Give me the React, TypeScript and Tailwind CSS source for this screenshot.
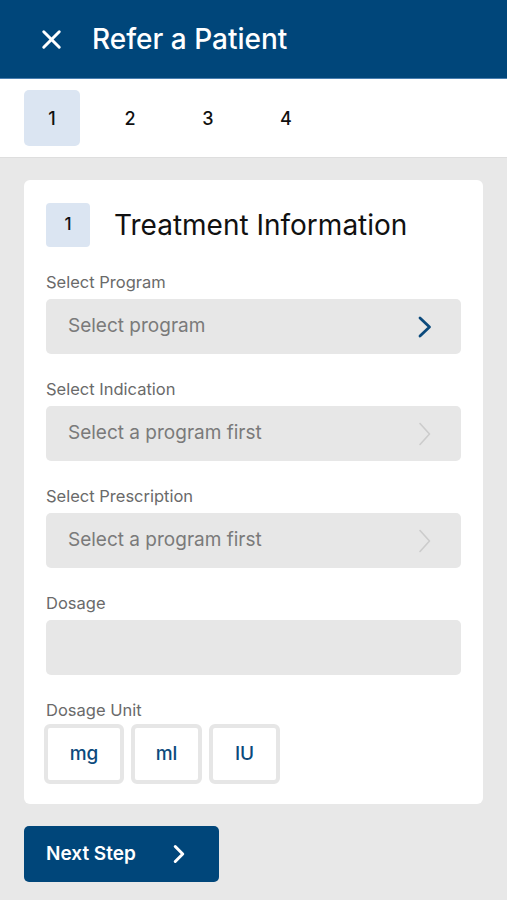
import { ChevronRight, X } from 'lucide-react';

const FIELDS = [
  { label: 'Select Program', placeholder: 'Select program', enabled: true },
  { label: 'Select Indication', placeholder: 'Select a program first', enabled: false },
  { label: 'Select Prescription', placeholder: 'Select a program first', enabled: false },
];

const UNITS = [
  { name: 'mg', width: 'w-[80px]' },
  { name: 'ml', width: 'w-[71px]' },
  { name: 'IU', width: 'w-[71px]' },
];

function Chevron({ enabled }: { enabled: boolean }) {
  if (enabled) {
    return (
      <svg width="16" height="24" viewBox="0 0 16 24" fill="none" className="text-[#0b4a7c]">
        <path d="M3 3l9.5 9L3 21" stroke="currentColor" strokeWidth="2.8" strokeLinecap="round" strokeLinejoin="round" />
      </svg>
    );
  }
  return (
    <svg width="16" height="26" viewBox="0 0 16 26" fill="none" className="text-[#cccccc]">
      <path d="M3 2.5l9.5 10.5L3 23.5" stroke="currentColor" strokeWidth="1.6" strokeLinecap="round" strokeLinejoin="round" />
    </svg>
  );
}

function SelectField({ label, placeholder, enabled }: { label: string; placeholder: string; enabled: boolean }) {
  return (
    <div className="mt-[25px]">
      <div className="text-[16.5px] leading-5 text-[#6a6a6a]">{label}</div>
      <button className="mt-[7px] flex h-[55px] w-full items-center justify-between rounded-[5px] bg-[#e7e7e7] pl-[22px] pr-[28px] text-left">
        <span className="text-[19px] text-[#7a7a7a]">{placeholder}</span>
        <Chevron enabled={enabled} />
      </button>
    </div>
  );
}

export default function App() {
  return (
    <div className="min-h-[900px] bg-[#e8e8e8] font-['Inter',sans-serif]">
      <header className="flex h-[79px] items-center border-b border-[#4a7fb0] bg-[#00467a] pl-[36px]">
        <X size={31} strokeWidth={2.3} className="text-white" />
        <h1 className="ml-[25px] text-[28px] font-medium text-white">Refer a Patient</h1>
      </header>

      <nav className="flex h-[79px] items-center gap-[22px] border-b border-[#dedede] bg-white pl-[24px]">
        {[1, 2, 3, 4].map((n) => (
          <div
            key={n}
            className={
              n === 1
                ? 'flex h-[56px] w-[56px] items-center justify-center rounded-[5px] bg-[#dbe5f2] text-[18px] font-medium text-[#111]'
                : 'flex h-[56px] w-[56px] items-center justify-center text-[18px] font-medium text-[#111]'
            }
          >
            {n}
          </div>
        ))}
      </nav>

      <main className="px-[24px] pt-[22px]">
        <section className="rounded-[6px] bg-white px-[22px] pb-[20px] pt-[23px]">
          <div className="flex items-center">
            <div className="flex h-[44px] w-[44px] items-center justify-center rounded-[4px] bg-[#dbe5f2] text-[17px] font-medium text-[#111]">
              1
            </div>
            <h2 className="ml-[24px] text-[28px] text-[#111]">Treatment Information</h2>
          </div>

          {FIELDS.map((f) => (
            <SelectField key={f.label} {...f} />
          ))}

          <div className="mt-[25px]">
            <div className="text-[16.5px] leading-5 text-[#6a6a6a]">Dosage</div>
            <div className="mt-[7px] h-[55px] w-full rounded-[5px] bg-[#e7e7e7]" />
          </div>

          <div className="mt-[25px]">
            <div className="text-[16.5px] leading-5 text-[#6a6a6a]">Dosage Unit</div>
            <div className="-ml-[2px] mt-[4px] flex gap-[7px]">
              {UNITS.map((u) => (
                <button
                  key={u.name}
                  className={`flex h-[60px] ${u.width} items-center justify-center rounded-[6px] border-[4px] border-[#e6e6e6] bg-white text-[19px] font-medium text-[#0b4a7c]`}
                >
                  {u.name}
                </button>
              ))}
            </div>
          </div>
        </section>

        <button className="mt-[22px] flex h-[56px] w-[195px] items-center rounded-[5px] bg-[#00467a] pl-[22px] text-[19px] font-semibold text-white">
          Next Step
          <ChevronRight size={30} strokeWidth={2.4} className="ml-[28px]" />
        </button>
      </main>
    </div>
  );
}
